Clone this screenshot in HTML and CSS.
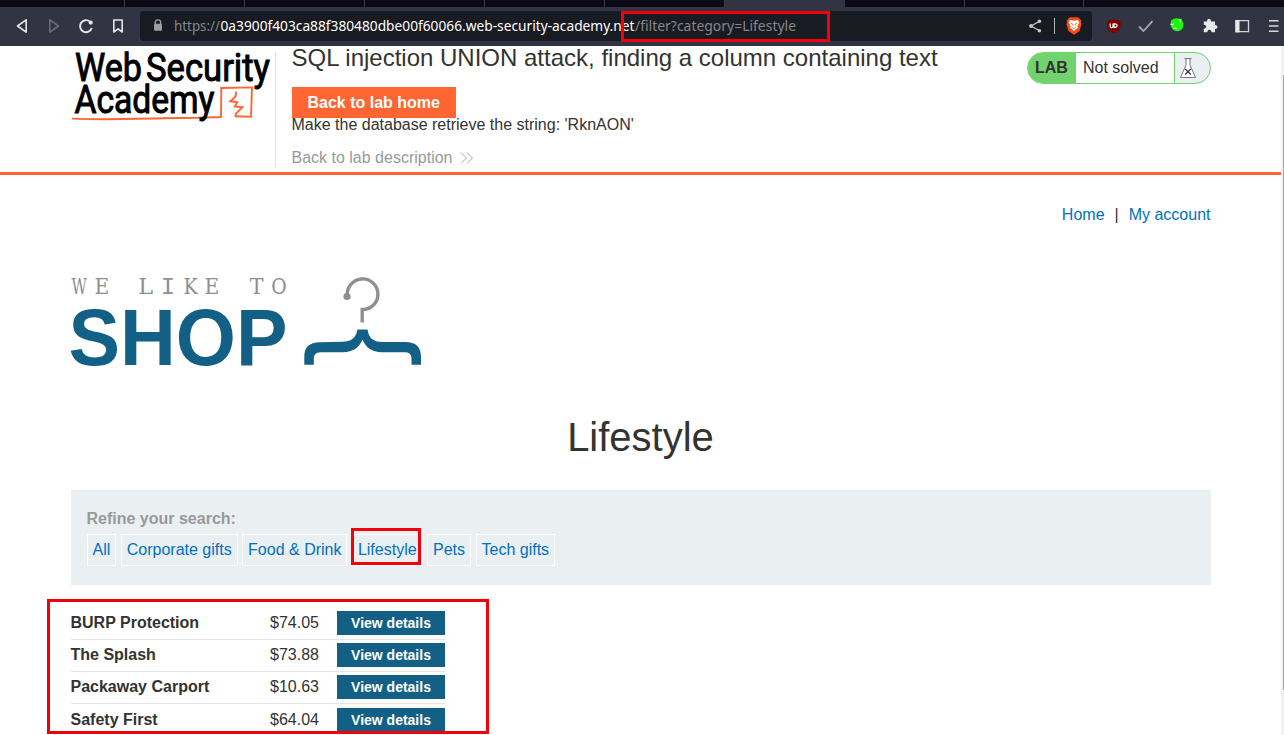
FILE: index.html
```html
<!DOCTYPE html>
<html lang="en">
<head>
<meta charset="utf-8">
<title>SQL injection UNION attack, finding a column containing text</title>
<link rel="stylesheet" href="styles.css">
</head>
<body>
<div class="window">
  <div class="tabs">
    <span class="tab first"></span><span class="tab"></span><span class="tab"></span><span class="tab"></span><span class="tab"></span><span class="tab"></span><span class="tab active"></span><span class="tab"></span><span class="tab"></span><span class="tab last"></span>
  </div>
  <div class="toolbar">
    <svg class="nav-icons" width="140" height="39" viewBox="0 7 140 39" fill="none" stroke="#e6e6ea" stroke-width="1.6" stroke-linejoin="round">
      <path d="M26.2 19.8V32.2L17.5 26Z"/>
      <path d="M49.8 19.8V32.2L58.5 26Z" stroke="#696b78"/>
      <path d="M90 21.6A6 6 0 1 0 91.8 28" stroke-width="1.9"/>
      <circle cx="90.7" cy="22.6" r="2.1" fill="#e6e6ea" stroke="none"/>
      <path d="M113.8 20H122.2V32L118 28.8L113.8 32Z"/>
    </svg>
    <div class="address">
      <svg class="lock" width="10" height="13" viewBox="0 0 10 13"><path d="M2.3 5V3.6a2.7 2.7 0 0 1 5.4 0V5" fill="none" stroke="#9b9ca6" stroke-width="1.4"/><rect x="1" y="4.7" width="8" height="7" rx="1" fill="#9b9ca6"/></svg>
      <svg class="url" width="640" height="26" viewBox="0 0 640 26">
        <text y="16" class="dim" x="0" textLength="46" lengthAdjust="spacingAndGlyphs">https://</text>
        <text y="16" class="host" x="46.5" textLength="414" lengthAdjust="spacingAndGlyphs">0a3900f403ca88f380480dbe00f60066.web-security-academy.net</text>
        <text y="16" class="dim" x="461" textLength="161" lengthAdjust="spacingAndGlyphs">/filter?category=Lifestyle</text>
      </svg>
    </div>
    <svg class="extensions" width="192" height="39" viewBox="1092 7 192 39">
      <path d="M1113.5 18.7C1116 20.2 1118 20.3 1120.5 20.5V26C1120.5 29.8 1117 32.3 1113.8 33.7C1110.5 32.3 1107 29.8 1107 26V20.5C1109.5 20.3 1111.5 20.2 1113.5 18.7Z" fill="#800000"/>
      <path d="M1110.2 23.5V26.2Q1110.2 27.7 1111.6 27.7T1113 26.2V23.5M1114 23.8V27.4H1115.2Q1117.1 27.3 1117.1 25.6T1115.2 23.8Z" fill="none" stroke="#fff" stroke-width="1.2"/>
      <path d="M1139 26.5L1143.5 31L1152.5 21.2" fill="none" stroke="#a6a7af" stroke-width="1.8"/>
      <path d="M1171 20.5Q1174 18 1178 18.3L1179.5 19L1181.5 18.7L1182 20.5Q1184.3 23 1183.3 26Q1183 30 1178 31.2Q1173 31 1171.5 27.5Q1170 25 1171 20.5Z" fill="#1cf80c"/>
      <path d="M1170.5 24L1172.5 24.8L1173.5 23.5M1173.5 28L1177 28.6M1179.5 19L1180.5 22.5" fill="none" stroke="#e6ffe2" stroke-width="1.1"/>
      <path d="M1203.8 21.5H1207C1206.8 17.8 1211.2 17.8 1211 21.5H1215V25C1218.3 24.9 1218.3 29 1215 29V32.3H1211.5C1211.4 29 1207.4 29 1207.3 32.3H1203.8V28.8C1207 28.7 1207 25 1203.8 24.8Z" fill="#e8e8ea"/>
      <path d="M1236 20.7H1248.5V31.7H1236Z" fill="none" stroke="#d4d4d8" stroke-width="1.3"/><path d="M1235.4 20H1239.5V32.4H1235.4Z" fill="#e8e8ea"/>
      <path d="M1269 20.8H1278.5M1269 26H1278.5M1269 31.2H1278.5" stroke="#d8d8dc" stroke-width="1.6"/>
    </svg>
    <svg class="share" width="62" height="30" viewBox="1028 11 62 30">
      <path d="M1039.7 21.3L1031 26L1039.7 30.8" fill="none" stroke="#c4c5ca" stroke-width="1.3"/>
      <g fill="#c4c5ca"><circle cx="1039.4" cy="21.3" r="1.8"/><circle cx="1031" cy="26" r="1.9"/><circle cx="1039.4" cy="30.8" r="1.8"/></g>
      <path d="M1054.5 18V34" stroke="#b4b5bd" stroke-width="1"/>
      <path d="M1069.8 17.3H1078.2L1079.8 19L1081.3 20.5L1081 23L1081.6 24L1079.5 31L1074 34.8L1068.5 31L1066.4 24L1067 23L1066.7 20.5L1068.2 19Z" fill="#fb4a12"/>
      <path d="M1070 20L1074 20.7L1078 20L1079.3 23L1077.2 26.2L1078 28L1076 29L1074 31.2L1072 29L1070 28L1070.8 26.2L1068.7 23Z" fill="#fff"/>
      <path d="M1070.8 23.3L1072.7 24V25.5M1077.2 23.3L1075.3 24V25.5M1072.3 27.7L1074 28.3L1075.7 27.7" fill="none" stroke="#fb4a12" stroke-width=".8"/>
    </svg>
  </div>

  <div class="page">
    <header class="lab-header">
      <svg class="academy" width="205" height="80" viewBox="70 46 205 80">
        <path d="M72 118.6Q100 119.8 138 118.8T198 117.7L221 117L221.3 88L252 87.4L251 116.8L235 116.3" fill="none" stroke="#ff6633" stroke-width="1.9"/>
        <path d="M236.3 91.5L235.5 96.5L230.3 101.3L237.3 102.3L234.8 106.5L242.5 107.3L235.8 113.6L235.5 117" fill="none" stroke="#ff6633" stroke-width="1.9"/>
        <g class="academy-text">
          <text x="75" y="80.7" textLength="67" lengthAdjust="spacingAndGlyphs">Web</text>
          <text x="146" y="80.7" textLength="124" lengthAdjust="spacingAndGlyphs">Security</text>
          <text x="74.5" y="112.9" textLength="140" lengthAdjust="spacingAndGlyphs">Academy</text>
        </g>
      </svg>
      <div class="title-block">
        <h2>SQL injection UNION attack, finding a column containing text</h2>
        <a class="lab-home">Back to lab home</a>
        <p class="task">Make the database retrieve the string: 'RknAON'</p>
        <a class="description">Back to lab description <svg width="14" height="12" viewBox="0 0 14 12" fill="none" stroke="#aaa"><path d="M1 .5L6.5 6L1 11.5M7 .5L12.5 6L7 11.5"/></svg></a>
      </div>
      <div class="status">
        <b>LAB</b><span>Not solved</span>
        <svg width="35" height="30" viewBox="0 0 35 30"><path d="M9.5 5.5H16.5M11 6V12L5.5 24.5H20.5L15 12V6" fill="#fff" stroke="#777" stroke-width="1"/><path d="M10.2 16L15.8 21.5M15.8 16L10.2 21.5" stroke="#333" stroke-width="1.2"/></svg>
      </div>
    </header>

    <main>
      <nav class="account"><a>Home</a><span>|</span><a>My account</a></nav>
      <svg class="shop-logo" width="360" height="100" viewBox="66 272 360 100">
        <g class="typewriter" text-anchor="middle">
          <text transform="translate(79.3 293.8) scale(.68 1)">W</text>
          <text transform="translate(101.8 293.8) scale(.92 1)">E</text>
          <text transform="translate(145.8 293.8) scale(1.02 1)">L</text>
          <text class="narrow" x="168" y="293.8">I</text>
          <text transform="translate(190.5 293.8) scale(.86 1)">K</text>
          <text transform="translate(212 293.8) scale(.92 1)">E</text>
          <text transform="translate(256.6 293.8) scale(.94 1)">T</text>
          <text transform="translate(279 293.8) scale(.86 1)">O</text>
        </g>
        <text class="shop-word" x="68.5" y="365" textLength="219" lengthAdjust="spacingAndGlyphs">SHOP</text>
        <path d="M347.5 296.5A15.3 15.3 0 1 1 362.2 309.5V322.5" fill="none" stroke="#8e9090" stroke-width="3.4"/>
        <circle cx="347" cy="296.5" r="3.6" fill="#8e9090"/>
        <path d="M357.5 329.5H367.5C369 339 374 342 383 342H405C416 342 421 347 421 357V364.8H411.5V359C411.5 354 409 352.3 404 352.3H382C372 352 366 348 362.5 339.5C359 348 353 352 343 352.3H323C316 352.3 313.8 354 313.8 359V364.8H304.3V357C304.3 347 309 342.4 320 342.2L342 341.8C351 341.8 356 338 357.5 329.5Z" fill="#126085"/>
      </svg>
      <h1>Lifestyle</h1>
      <section class="filters">
        <label>Refine your search:</label>
        <div class="filter-links"><a>All</a><a>Corporate gifts</a><a>Food &amp; Drink</a><a>Lifestyle</a><a>Pets</a><a>Tech gifts</a></div>
      </section>
      <div class="products">
        <div class="row"><b>BURP Protection</b><span>$74.05</span><a>View details</a></div>
        <div class="row"><b>The Splash</b><span>$73.88</span><a>View details</a></div>
        <div class="row"><b>Packaway Carport</b><span>$10.63</span><a>View details</a></div>
        <div class="row"><b>Safety First</b><span>$64.04</span><a>View details</a></div>
      </div>
    </main>
    <div class="scrollbar"></div>
  </div>
  <div class="mark mark-url"></div>
  <div class="mark mark-category"></div>
  <div class="mark mark-products"></div>
</div>
</body>
</html>
```
FILE: styles.css
```css
* { box-sizing: border-box; }
body { margin: 0; overflow: hidden; background: #fff; color: #333332; font: 16px/20px "Liberation Sans", Arial, sans-serif; }
svg { display: block; overflow: visible; }
.window { position: relative; width: 1284px; height: 735px; overflow: hidden; }
.tabs { display: flex; height: 7px; background: #0b0a16; }
.tab { width: 120px; border-right: 1px solid #3b3b40; flex: none; }
.tab.first { width: 125px; }
.tab.active { width: 120px; background: #323443; border: 0; }
.tab.active + .tab + .tab { width: 119px; }
.tab.last { border: 0; }
.toolbar { display: flex; height: 39px; background: #323443; position: relative; }
.nav-icons, .extensions { flex: none; }
.address { width: 952px; height: 30px; margin-top: 4px; background: #191b22; border-radius: 4px; display: flex; flex: none; }
.lock { margin: 8px 0 0 13px; }
.url { margin: 4px 0 0 11px; font: 14.5px "Noto Sans", sans-serif; }
.url .dim { fill: #85868c; }
.url .host { fill: #fff; }
.share { position: absolute; left: 1028px; top: 4px; }
.page { position: relative; height: 689px; padding-right: 3px; }
.lab-header { display: flex; height: 129px; padding-left: 70px; border-bottom: 3px solid #ff6633; }
.academy { flex: none; }
.academy-text { font: 400 38px Roboto, sans-serif; fill: #000; stroke: #000; stroke-width: 1px; }
.title-block { width: 736px; height: 116px; margin-top: 6px; padding-left: 15.5px; border-left: 1px solid #e3e3e3; display: flex; flex-direction: column; align-items: flex-start; }
h2 { margin: -9px 0 14px; font-size: 24px; line-height: 30px; font-weight: 400; white-space: nowrap; }
.lab-home { height: 31px; padding: 0 16px; line-height: 31px; background: #ff6633; color: #fff; font-weight: 700; }
.task { margin: -3px 0 13px; }
.description { display: flex; align-items: center; gap: 8px; color: #999; }
.status { display: flex; width: 184px; height: 32px; margin: 6px 0 0 16px; border: 1px solid #72d26d; border-radius: 16px; overflow: hidden; line-height: 30px; background: #eaeff2; }
.status b { width: 48px; flex: none; padding-left: 7px; background: #72d26d; }
.status span { width: 99px; flex: none; padding-left: 7px; background: #fff; border-right: 1px solid #72d26d; }
main { padding: 0 70.5px; }
.account { display: flex; justify-content: flex-end; gap: 10px; padding-top: 30px; color: #333; }
.account a, .filters a { color: #0071c2; }
.shop-logo { margin: 47px 0 0 -4.5px; }
.typewriter { font: 22px "DejaVu Serif", serif; fill: #8e9090; }
.typewriter .narrow { font: 24px "Liberation Mono", monospace; }
.shop-word { font: 700 80px "Liberation Sans", sans-serif; fill: #126085; }
h1 { margin: 41px 0 29px; font-weight: 400; font-size: 40px; line-height: 48px; text-align: center; }
.filters { height: 95px; padding: 19px 16px; background: #eaeff2; }
.filters label { display: block; height: 25px; color: #999; font-weight: 700; }
.filter-links { display: flex; gap: 4.45px; }
.filter-links a { height: 32px; padding: 0 5px; line-height: 30px; border: 1px solid #fff; }
.products { width: 374.5px; margin-top: 22.4px; }
.row { display: grid; grid-template-columns: 199.5px 67px 108px; align-items: center; height: 32.2px; border-bottom: 1px solid #e3e3e3; }
.row a { height: 24px; background: #126085; color: #fff; font-size: 14px; line-height: 24px; font-weight: 700; text-align: center; }
.row:last-child { border: 0; }
.scrollbar { position: absolute; right: 0; top: 0; width: 3px; height: 689px; background: linear-gradient(#a8a8a8, #a8a8a8) 2px 29px / 1px 615px no-repeat #f1f1f1; }
.mark { position: absolute; border: 3px solid #f3000d; }
.mark-url { left: 621px; top: 11px; width: 209px; height: 31px; }
.mark-category { left: 351px; top: 528px; width: 70px; height: 37px; }
.mark-products { left: 47px; top: 599px; width: 442px; height: 135px; }
```
